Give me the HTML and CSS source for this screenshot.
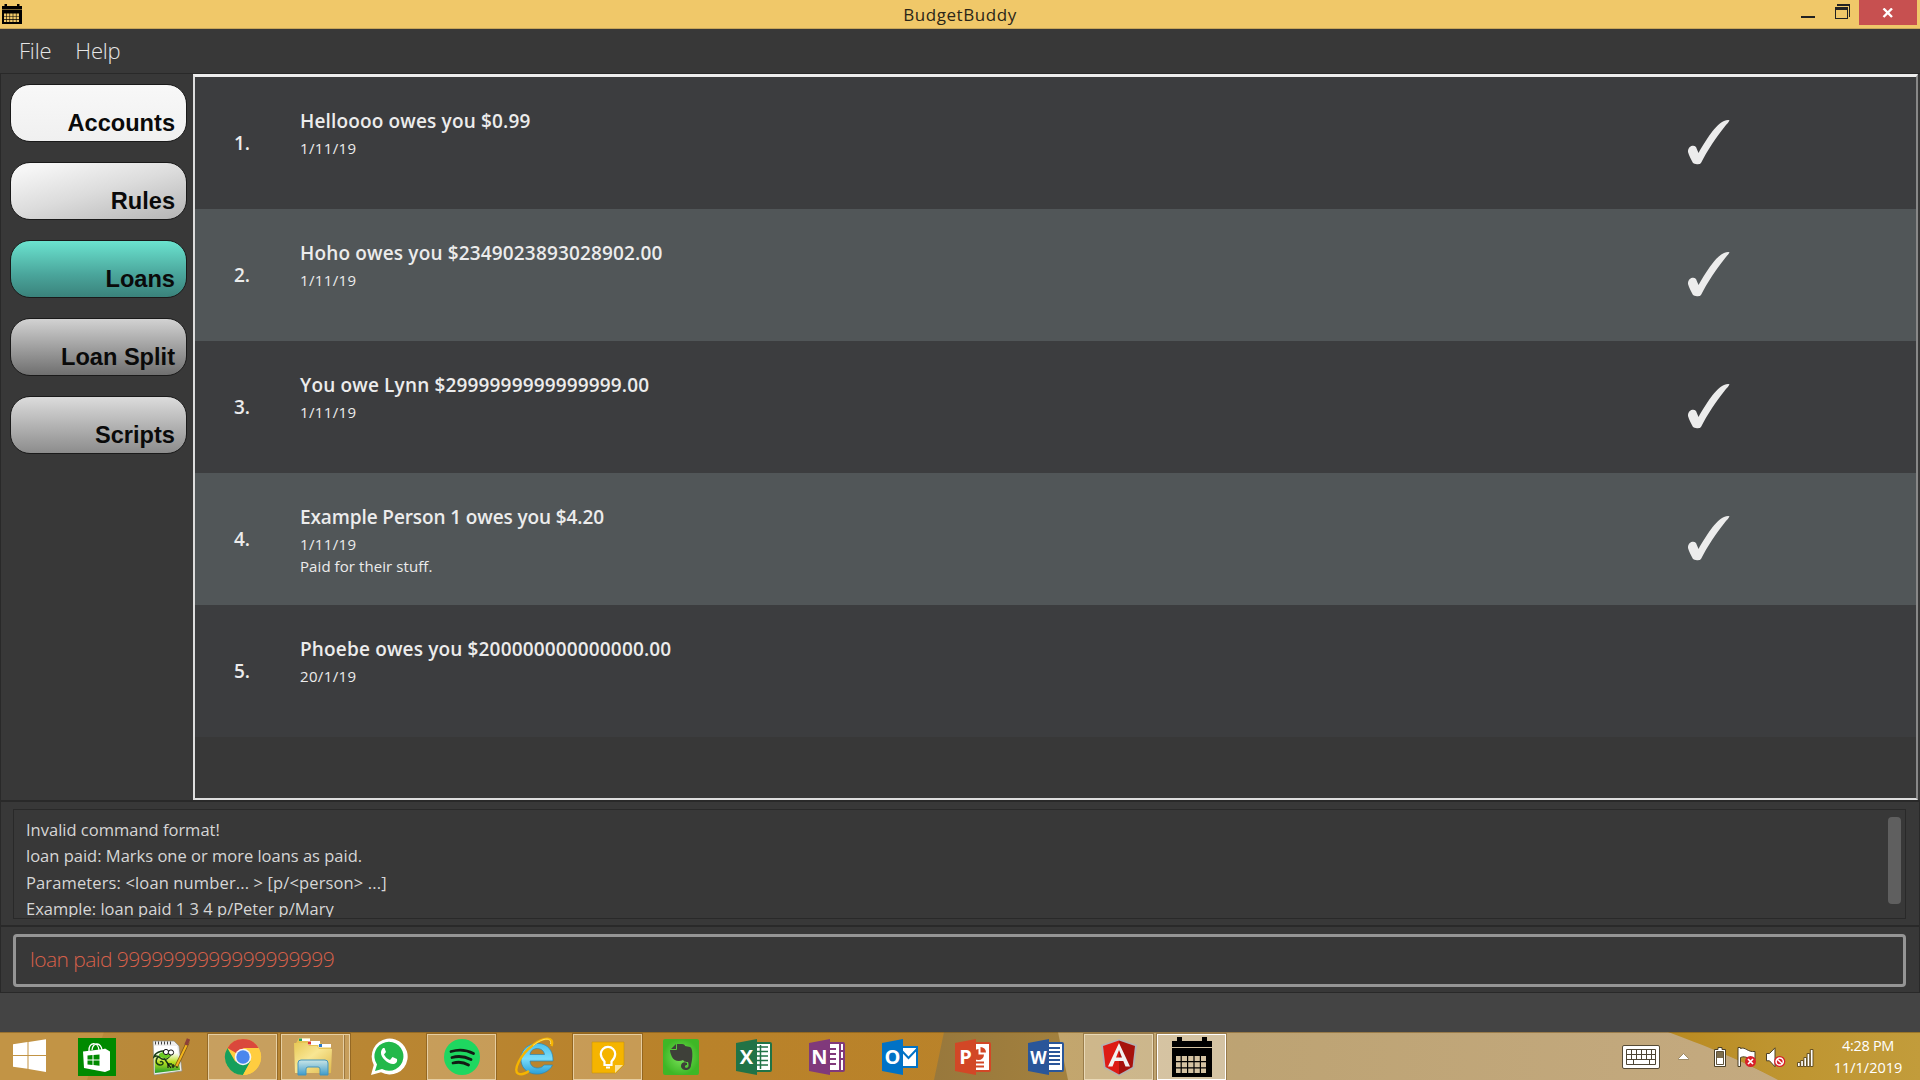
FILE: index.html
```html
<!DOCTYPE html>
<html lang="en">
<head>
<meta charset="utf-8">
<title>BudgetBuddy</title>
<link rel="stylesheet" href="styles.css">
</head>
<body>
<div class="screen">
  <header class="titlebar">
    <svg class="app-icon" width="20" height="20" viewBox="0 0 40 40"><use href="#calendar"/></svg>
    <span class="title">BudgetBuddy</span>
    <div class="window-controls">
      <svg width="58" height="25" viewBox="0 0 58 25"><path d="M0 16h14v2H0z" fill="#222"/><path d="M36 4h13v13h-1V6H36zM34 7h13v12H34zM35 10v8h11v-8z" fill="#222" fill-rule="evenodd"/></svg>
      <div class="close"><svg width="12" height="10" viewBox="0 0 12 10"><path d="M1.500 .5 10 9M10 .5 1.500 9" stroke="#fff" stroke-width="2.400"/></svg></div>
    </div>
  </header>
  <nav class="menubar"><span>File</span><span>Help</span></nav>
  <main class="main">
    <aside class="sidebar">
      <div class="tab accounts">Accounts</div>
      <div class="tab rules">Rules</div>
      <div class="tab loans">Loans</div>
      <div class="tab split">Loan Split</div>
      <div class="tab scripts">Scripts</div>
    </aside>
    <section class="list">
      <div class="row"><div class="num">1.</div><div class="info"><div class="who">Helloooo owes you $0.99</div><div class="sub date">1/11/19</div></div><svg class="tick" viewBox="0 0 42 45"><use href="#tick"/></svg></div>
      <div class="row alt"><div class="num">2.</div><div class="info"><div class="who">Hoho owes you $2349023893028902.00</div><div class="sub date">1/11/19</div></div><svg class="tick" viewBox="0 0 42 45"><use href="#tick"/></svg></div>
      <div class="row"><div class="num">3.</div><div class="info"><div class="who">You owe Lynn $2999999999999999.00</div><div class="sub date">1/11/19</div></div><svg class="tick" viewBox="0 0 42 45"><use href="#tick"/></svg></div>
      <div class="row alt"><div class="num">4.</div><div class="info"><div class="who tight">Example Person 1 owes you $4.20</div><div class="sub date">1/11/19</div><div class="sub">Paid for their stuff.</div></div><svg class="tick" viewBox="0 0 42 45"><use href="#tick"/></svg></div>
      <div class="row"><div class="num">5.</div><div class="info"><div class="who">Phoebe owes you $200000000000000.00</div><div class="sub date">20/1/19</div></div></div>
    </section>
  </main>
  <section class="result">
    <div class="result-box">
      <div class="result-text">
        <div>Invalid command format!</div>
        <div>loan paid: Marks one or more loans as paid.</div>
        <div class="loose">Parameters: &lt;loan number... &gt; [p/&lt;person&gt; ...]</div>
        <div>Example: loan paid 1 3 4 p/Peter p/Mary</div>
      </div>
      <div class="thumb"></div>
    </div>
  </section>
  <section class="command"><div class="command-box">loan paid 9999999999999999999</div></section>
  <footer class="statusbar"></footer>
  <div class="taskbar">
    <svg class="wallpaper" viewBox="0 0 1920 48" preserveAspectRatio="none">
      <defs>
        <linearGradient id="w1"><stop offset="0" stop-color="#b98b3e"/><stop offset=".35" stop-color="#b9822a"/><stop offset=".65" stop-color="#ba8329"/><stop offset="1" stop-color="#b0702a"/></linearGradient>
        <linearGradient id="w2"><stop offset="0" stop-color="#98783c"/><stop offset="1" stop-color="#a3813e"/></linearGradient>
        <linearGradient id="w3"><stop offset="0" stop-color="#c3a66d"/><stop offset=".25" stop-color="#bda373"/><stop offset="1" stop-color="#c4aa80"/></linearGradient>
        <linearGradient id="w4"><stop offset="0" stop-color="#b98a20"/><stop offset=".4" stop-color="#be942f"/><stop offset="1" stop-color="#c29c3b"/></linearGradient>
      </defs>
      <path d="M0 0h1920v48H0z" fill="url(#w1)"/>
      <path d="M0 0h104L87 48H0z" fill="#c29445"/>
      <path d="M944 0h116l10 48H934z" fill="url(#w2)"/>
      <path d="M1058 0h622l100 48H1068z" fill="url(#w3)"/>
      <path d="M1668 0h252v48h-142C1755 35 1715 17 1668 0z" fill="url(#w4)"/>
      <path d="M0 .5h1920" stroke="#6b4a15" stroke-opacity=".45"/>
    </svg>
    <div class="apps">
      <div class="start"><svg width="34" height="34" viewBox="0 0 34 34"><path d="M0 5.200 14.500 3.100V16H0zM15.500 3 33 .3V16H15.500zM0 17h14.500v12.800L0 27.700zM15.500 17H33v16L15.500 30z" fill="#fff"/></svg></div>
      <div class="app"><svg width="38" height="38" viewBox="0 0 38 38"><path d="M0 0h38v38H0z" fill="#008a00"/><path d="M5 13.500 26 11l1-.5 5 3v18.500l-5 2-21-4z" fill="#fff"/><path d="M11 13C10 4 20 3 21 12M14 12C15 3 23 5 24 12" stroke="#fff" stroke-width="1.300" fill="none"/><path d="M9.500 17.500 14.500 17v4.500h-5zM15.500 17l6-.6v5.100h-6zM9.500 22.500h5V27l-5-.6zM15.500 22.500h6v5.300l-6-.7z" fill="#008a00"/></svg></div>
      <div class="app"><svg width="40" height="38" viewBox="0 0 40 38"><defs><linearGradient id="np" x2="0" y2="1"><stop offset=".25" stop-color="#fff"/><stop offset=".6" stop-color="#b9e01f"/><stop offset="1" stop-color="#1f9a2a"/></linearGradient></defs><path d="M3 3h21l5 5 3 25-28 4z" fill="#eee" stroke="#8b8b80" stroke-width=".7"/><path d="M4 8h23l3 24-25 3z" fill="url(#np)"/><path d="M5 5h18" stroke="#444" stroke-width="3" stroke-dasharray="1 2"/><path d="M22 15C16 10 5 14 4 19c4-3 5 1 8 2s7 0 9-5M10 18c-4 1-6 8 0 9 5 0 3-5 0-3M14 20l4 6h4" fill="none" stroke="#193d17" stroke-width="1.500"/><path d="M9 16c5-4 12-3 12 1-2 4-9 4-12 1z" fill="#69c925"/><circle cx="16" cy="14" r="2.600" fill="#fff" stroke="#111"/><circle cx="21" cy="14.500" r="2.600" fill="#fff" stroke="#111"/><path d="M18 30v-4l3 4M23 26v4M21.500 28h4M27 26v4" stroke="#111" stroke-width="1.200" fill="none"/><path d="M26.500 28 38 4" stroke="#7b5517" stroke-width="3.600"/><path d="M26.500 28 38 4" stroke="#f3b51c" stroke-width="2"/><path d="m36 7 2.500-6" stroke="#8c4038" stroke-width="3.500"/></svg></div>
      <div class="app"><div class="plate"><svg width="38" height="38" viewBox="0 0 38 38"><circle cx="19" cy="19" r="18" fill="#ffcd40"/><path d="M19 19 3.400 10A18 18 0 0 1 34.600 10z" fill="#da483c"/><path d="M3.400 10A18 18 0 0 0 19 37l7.500-14L11.200 23.500z" fill="#159f5c"/><path d="M19 10h15.600A18 18 0 0 1 19 37l7.800-13.500z" fill="#ffcd40"/><circle cx="19" cy="19" r="8.300" fill="#f4f4f4"/><circle cx="19" cy="19" r="6.700" fill="#4a86ed"/></svg></div></div>
      <div class="app"><div class="plate stack"><svg width="42" height="40" viewBox="0 0 42 40"><defs><linearGradient id="ef" x2="1" y2="1"><stop stop-color="#e8c957"/><stop offset=".45" stop-color="#f8e693"/><stop offset="1" stop-color="#dfb94c"/></linearGradient><linearGradient id="eb" x2="0" y2="1"><stop stop-color="#c4e6f1" stop-opacity=".9"/><stop offset="1" stop-color="#3c9bcb"/></linearGradient></defs><path d="M4 6 7 1h11v3h8l4 3h8l1 6v22H3z" fill="#e7c454"/><path d="M7 1.500h11V4H7zM16 4h12v4H16zM26.500 7H39v3.500H26.500z" fill="#fff"/><path d="M7 1.500h3V4H7z" fill="#25a05a"/><path d="M16 4.500h3v3h-3z" fill="#dc3a32"/><path d="M27 7h3v3h-3z" fill="#2b79c9"/><path d="M2 6h13l2 3h8l2 3h13l-1 24H3z" fill="url(#ef)"/><path d="M6 38V26q0-3 3-3h24q3 0 3 3v12h-8v-6q0-2-2-2H16q-2 0-2 2v6z" fill="url(#eb)" stroke="#4595bb"/></svg></div></div>
      <div class="app"><svg width="38" height="38" viewBox="0 0 38 38"><path d="M1 37 3.800 27A18 18 0 1 1 11 34.300z" fill="#fff"/><path d="m5 33 2-6.500A14.500 14.500 0 1 1 12 31z" fill="#22b84a"/><path d="M13 10c-5 5 0 12 6 15 4 2 9 1 8-4l-4.500-2-2.500 3c-3-1-5-3.500-6-5.500l2-2.500L14.500 10z" fill="#fff"/></svg></div>
      <div class="app"><div class="plate"><svg width="38" height="38" viewBox="0 0 38 38"><circle cx="19" cy="19" r="18" fill="#1ed760"/><path d="M8 13.500c8-2.500 16-1.500 22.500 2M9 19.500c7-2 13-1 19 2M10 25c6-1.500 10.500-1 15.500 2" stroke="#121b14" stroke-width="2.800" stroke-linecap="round" fill="none"/></svg></div></div>
      <div class="app"><svg width="40" height="40" viewBox="0 0 40 40"><defs><linearGradient id="ie" x2="0" y2="1"><stop stop-color="#4cc1ed"/><stop offset=".5" stop-color="#79dcfa"/><stop offset="1" stop-color="#2b9fd6"/></linearGradient></defs><path fill-rule="evenodd" d="M38 24H15c0 8 11 9 14 4h8.500C31 42 5 40 6 21 7 2 39 0 38 24zM15 17.500h14.500c-1-8-13.500-8-14.500 0z" fill="url(#ie)" stroke="#2a86b8" stroke-width=".7"/><path d="M36.500 9C40-1 28 0 18 8 5 18-2 33 3 36.500 6 38 10 37 14 34" fill="none" stroke="#f6b500" stroke-width="2.400"/><path d="M35.500 7C37-.5 27 1 18 8.500" fill="none" stroke="#ffe067"/></svg></div>
      <div class="app"><div class="plate"><svg width="34" height="34" viewBox="0 0 34 34"><path d="M1 2h32v23l-8 8H1z" fill="#f5b400" stroke="#c8940e" stroke-width=".6"/><path d="M24 33v-8h8z" fill="#fbe39b"/><path d="M13.500 21.500C11 19 9.800 17.500 9.800 14a7.200 7.200 0 0 1 14.400 0c0 3.500-1.200 5-3.700 7.500v3.500h-7zM15 27.500h4" fill="none" stroke="#fff" stroke-width="2.200"/></svg></div></div>
      <div class="app"><svg width="38" height="38" viewBox="0 0 38 38"><defs><radialGradient id="ev"><stop stop-color="#7be25a"/><stop offset="1" stop-color="#3eb726"/></radialGradient></defs><rect x="1" y="1" width="36" height="36" rx="2" fill="url(#ev)"/><path d="M8 12h6q1 0 1-1V6h5c2 0 3 1 3 2l5 1c3 1 3 11 1 18 0 7-10 6-10 1 0-3 3-5 6-3v2c-2 0-3 2-1 3 3 0 3-3 2-6-4 0-4-1-5-2-4 2-9 1-11-3-1-2-2-5-2-7zM9 11l5-5v5z" fill="#3e4039"/></svg></div>
      <div class="app"><svg width="38" height="38" viewBox="0 0 38 38"><rect x="18" y="5" width="18" height="28" rx="1" fill="#fff" stroke="#217346" stroke-width="2"/><path d="M20 9h13M20 13.500h13M20 18h13M20 22.500h13M20 27h13M25.500 7v24" stroke="#217346" stroke-width="1.500" fill="none"/><path d="m1 5 21-4v36L1 33z" fill="#217346"/><text x="11.500" y="26" class="letter">X</text></svg></div>
      <div class="app"><svg width="38" height="38" viewBox="0 0 38 38"><rect x="18" y="5" width="18" height="28" rx="1" fill="#fff" stroke="#80397b" stroke-width="2"/><path d="M20 10h8v2h-8zm0 5h8v2h-8zm0 5h8v2h-8zm0 5h8v2h-8zM31 5h2v28h-2zM33 12h3v2h-3zm0 8h3v2h-3z" fill="#80397b"/><path d="m1 5 21-4v36L1 33z" fill="#80397b"/><text x="11.500" y="26" class="letter">N</text></svg></div>
      <div class="app"><svg width="38" height="38" viewBox="0 0 38 38"><path d="M20 9h16v20H20z" fill="#fff" stroke="#0072c6" stroke-width="2"/><path d="m20 12 7.500 8L36 11" fill="none" stroke="#0072c6" stroke-width="2"/><path d="m1 5 21-4v36L1 33z" fill="#0072c6"/><text x="11.500" y="26" class="letter">O</text></svg></div>
      <div class="app"><svg width="38" height="38" viewBox="0 0 38 38"><rect x="18" y="5" width="18" height="28" rx="1" fill="#fff" stroke="#d24726" stroke-width="2"/><path d="M20 23.500h10v2H20zm0 4h10v2H20zM24.500 11a5.500 5.500 0 1 0 5.500 5.500h-5.500zM26.500 9v5.500H32A5.500 5.500 0 0 0 26.500 9z" fill="#d24726"/><path d="m1 5 21-4v36L1 33z" fill="#d24726"/><text x="11.500" y="26" class="letter">P</text></svg></div>
      <div class="app"><svg width="38" height="38" viewBox="0 0 38 38"><rect x="18" y="5" width="18" height="28" rx="1" fill="#fff" stroke="#2a5699" stroke-width="2"/><path d="M22 9h11v2H22zm0 4h11v2H22zm0 4h11v2H22zm0 4h11v2H22zm0 4h11v2H22z" fill="#2a5699"/><path d="m1 5 21-4v36L1 33z" fill="#2a5699"/><text x="11.500" y="25.500" class="letter wide">W</text></svg></div>
      <div class="app"><div class="plate"><svg width="38" height="38" viewBox="0 0 38 38"><path d="M19 1 37 7l-3 23-15 8-15-8L1 7z" fill="#b3b3b3"/><path d="M19 2.500 3 8l2.500 21L19 36.500z" fill="#dd1b16"/><path d="M19 2.500 35 8l-2.500 21L19 36.500z" fill="#a6120d"/><path fill-rule="evenodd" d="m19 5 11 23.500h-4.500l-2.200-5.500h-8.600l-2.200 5.500H8zM19 12l-3 7.500h6z" fill="#f2f2f2"/></svg></div></div>
      <div class="app"><div class="plate active"><svg width="40" height="40" viewBox="0 0 40 40"><g id="calendar"><path fill-rule="evenodd" d="M0 4h5V0h5v4h20V0h5v4h5v6H0zM0 11h40v29H0zM4 19v5h4.600v-5zm5.800 0v5h5.200v-5zm6.400 0v5h5.200v-5zm6.400 0v5h5.200v-5zm6.400 0v5h5v-5zM4 25.200v5h4.600v-5zm5.800 0v5h5.200v-5zm6.400 0v5h5.200v-5zm6.400 0v5h5.200v-5zm6.400 0v5h5v-5zM4 31.400v4.600h4.600v-4.600zm5.800 0v4.600h5.200v-4.600zm6.400 0v4.600h5.200v-4.600zm6.400 0v4.600h5.200v-4.600zm6.400 0v4.600h5v-4.600z" fill="#000"/></g></svg></div></div>
    </div>
    <div class="tray">
      <svg width="38" height="24" viewBox="0 0 38 24"><rect x=".5" y=".5" width="37" height="23" rx="1.500" fill="#fff" stroke="#554a35"/><path d="M4.500 4.500h29v15h-29zM4.500 9.500h29M4.500 14.500h29M9.500 4.500v10M14.500 4.500v10M19.500 4.500v10M24.500 4.500v10M29.500 4.500v10M11.500 14.500v5M27.500 14.500v5" fill="none" stroke="#4d4535"/></svg>
      <svg class="up" width="11" height="7" viewBox="0 0 11 7"><path d="M.5 6.500v-1l5-5 5 5v1z" fill="#fff" stroke="#8a7750" stroke-width=".8"/></svg>
      <svg class="battery" width="12" height="20" viewBox="0 0 12 20"><path d="M4 .5h4v2h3.500v17H.5v-17H4z" fill="#fff" stroke="#4c4026"/><path d="M3 5h6v6H3z" fill="#7d6d4c"/><path d="M2.500 4.500h7v13h-7z" fill="none" stroke="#4c4026" stroke-width=".9"/></svg>
      <svg class="flag" width="20" height="21" viewBox="0 0 20 21"><path d="M1 .5h2.500v1c5-2 7 4 14.500 3v8C12 13 9 8 3.500 10.500V19.500H1z" fill="#fff" stroke="#4c4026"/><circle cx="13.500" cy="14.500" r="5.500" fill="#d8202a"/><path d="m11 12 5 5M16 12l-5 5" stroke="#fff" stroke-width="1.700"/></svg>
      <svg class="sound" width="20" height="21" viewBox="0 0 20 21"><path d="M.5 6.500h3L9 .8v19l-5.500-6h-3z" fill="#fff" stroke="#4c4026"/><circle cx="13.700" cy="14.500" r="5.600" fill="#d8202a"/><circle cx="13.700" cy="14.500" r="3.600" fill="none" stroke="#fff" stroke-width="1.500"/><path d="m11 12 5.500 5" stroke="#fff" stroke-width="1.500"/></svg>
      <svg class="signal" width="17" height="18" viewBox="0 0 17 18"><path d="M.5 13.500h2.700v4H.5zM3.700 11.500h2.700v6H3.700zM6.900 8.500h2.700v9H6.900zM10.100 4.500h2.700v13h-2.700zM13.300.5H16v17h-2.700z" fill="#fff" stroke="#5a4518" stroke-width=".9"/></svg>
      <div class="clock"><div class="time">4:28 PM</div><div>11/1/2019</div></div>
    </div>
  </div>
</div>
<svg width="0" height="0" class="defs"><defs><path id="tick" d="M0 32C-.500 27 5 24 8 27L10.500 33C18 20 28 4 36 1q3-1.200 5.500-.8c-1 2.500-3 4-4.500 6C29 16 19 31 13 43q-1 1.500-4 1.300T5 43C3 39 1 36 0 32z" fill="#ececec"/></defs></svg>
</body>
</html>
```

FILE: styles.css
```css
* { box-sizing: border-box; }
body { margin: 0; background: #383838; overflow: hidden; font-family: "Open Sans", "Noto Sans", sans-serif; }
svg { display: block; flex: none; }
.defs { position: absolute; }
.screen { width: 1920px; height: 1080px; display: flex; flex-direction: column; overflow: hidden; white-space: nowrap; }

.titlebar { height: 29px; background: #f0c869; border-bottom: 1px solid #c9a75a; display: grid; grid-template-columns: 1fr auto 1fr; align-items: start; }
.app-icon { margin: 4px 0 0 2px; }
.title { font-size: 17px; line-height: 30px; letter-spacing: .55px; color: #2b2618; }
.window-controls { display: flex; justify-content: flex-end; }
.close { width: 58px; height: 25px; margin-right: 3px; background: #c75050; display: flex; align-items: center; justify-content: center; }

.menubar { height: 45px; border-bottom: 1px solid #292929; display: flex; gap: 24px; padding-left: 19px; color: #e6e6e6; font-size: 22px; font-weight: 300; line-height: 42px; letter-spacing: -.2px; }

.main { height: 726px; display: flex; }
.sidebar { width: 193px; border-left: 1px solid #292929; padding: 10px 6px 0 9px; display: flex; flex-direction: column; gap: 20px; }
.tab { height: 58px; border: 1px solid #1a1a1a; border-radius: 20px; display: flex; justify-content: flex-end; align-items: flex-end; padding: 0 11px 4px 0; font: bold 23.600px/27px "Liberation Sans", sans-serif; color: #0a0a0a; }
.accounts { background: linear-gradient(#f8f8f8, #f0f0f0); }
.rules { background: linear-gradient(165deg, #f6f6f6 10%, #dcdcdc 50%, #b4b4b4); }
.loans { background: linear-gradient(#6be3cf, #4aa59b 60%, #3a827b); }
.split { background: linear-gradient(#d2d2d2, #6f6f6f); }
.scripts { background: linear-gradient(#dcdcdc, #8c8c8c); }
.list { width: 1725px; border: 2px solid #ddd; border-top: 3px solid #eee; border-right-color: #888; }
.row { height: 132px; background: #3c3d3f; display: flex; color: #ececec; }
.alt { background: #515658; }
.num { width: 105px; padding-left: 39px; font-size: 19px; font-weight: 600; line-height: 132px; }
.info { padding-top: 31px; }
.who { font-size: 19px; font-weight: 600; line-height: 27px; height: 29px; letter-spacing: .16px; }
.tight { letter-spacing: -.11px; }
.sub { font-size: 15px; line-height: 22px; letter-spacing: .08px; }
.date { letter-spacing: .35px; }
.tick { width: 42px; height: 45px; margin: 43px 186px 0 auto; }

.result { height: 126px; border: 1px solid #292929; border-top-width: 2px; padding: 7px 13px 7px 12px; }
.result-box { height: 110px; border: 1px solid #292929; display: flex; justify-content: space-between; padding: 7px 4px 1px 12px; }
.result-text { overflow: hidden; font-size: 16.500px; line-height: 26.300px; color: #d6d6d6; }
.loose { letter-spacing: .13px; }
.thumb { width: 13px; height: 87px; border-radius: 4px; background: #5f5f5f; }
.command { height: 67px; border: 1px solid #292929; padding: 7px 13px 5px 12px; }
.command-box { height: 53px; border: 3px solid #959595; border-radius: 4px; padding-left: 14px; font-size: 21px; font-weight: 300; line-height: 45px; letter-spacing: -.55px; color: #d7604a; }
.statusbar { height: 39px; background: #444; }

.taskbar { height: 48px; position: relative; display: flex; justify-content: space-between; }
.wallpaper { position: absolute; inset: 0; width: 1920px; height: 48px; z-index: -1; }
.apps { display: flex; }
.start { width: 60px; padding: 7px 0 0 13px; }
.app { width: 73px; height: 48px; display: flex; align-items: center; justify-content: center; padding-top: 1px; }
.plate { width: 69px; height: 46px; border: 1px solid rgba(255, 245, 220, .55); outline: 1px solid rgba(80, 50, 10, .35); background: rgba(255, 255, 255, .2); display: flex; align-items: center; justify-content: center; }
.stack svg { margin: 0 auto; }
.stack::after { content: ""; width: 5px; height: 44px; border: solid rgba(255, 245, 220, .55); border-width: 0 0 0 1px; box-shadow: inset 1px 0 rgba(80, 50, 10, .35); }
.active { background: rgba(255, 255, 255, .35); border-color: #fff; }
.letter { font: bold 20px "Open Sans", sans-serif; fill: #fff; text-anchor: middle; }
.wide { font-size: 17px; }
.tray { display: flex; align-items: flex-start; }
.tray svg { margin-top: 13px; }
.tray .up { margin: 21px 0 0 18px; }
.tray .battery { margin: 15px 0 0 25px; }
.tray .flag { margin: 15px 0 0 11px; }
.tray .sound { margin: 15px 0 0 9px; }
.tray .signal { margin: 17px 0 0 11px; }
.clock { width: 70px; margin: 3px 17px 0 19px; text-align: center; color: #fff; font-size: 14.500px; line-height: 22px; }
.time { letter-spacing: -.3px; }
```
